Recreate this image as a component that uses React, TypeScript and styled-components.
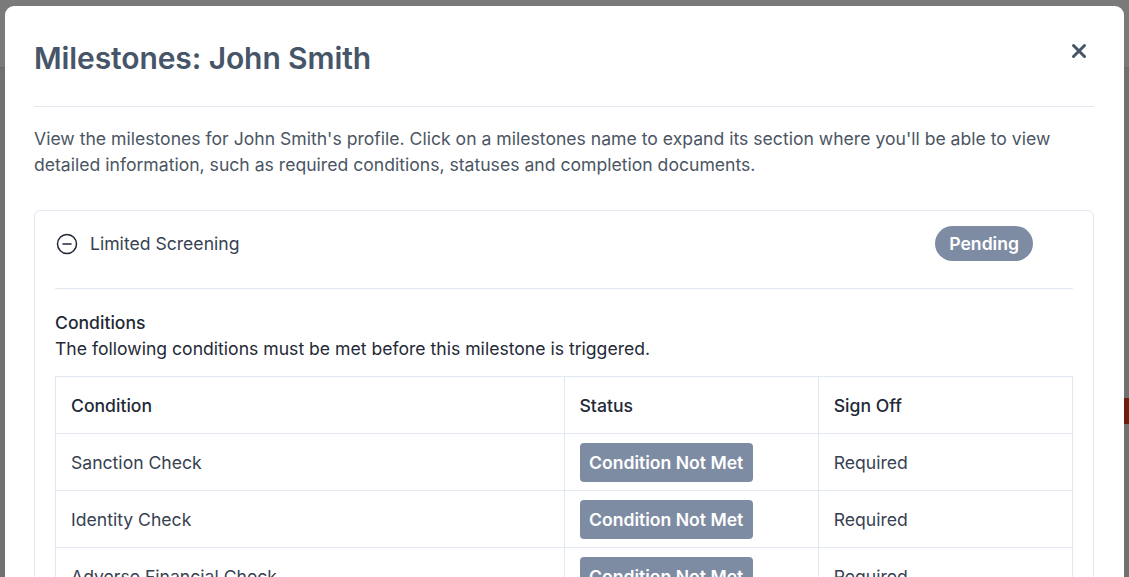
import React from 'react';
import styled, { createGlobalStyle } from 'styled-components';

const GlobalStyle = createGlobalStyle`
  html, body {
    margin: 0;
    padding: 0;
    height: 100%;
    overflow: hidden;
    font-family: Inter, "Noto Sans", "Liberation Sans", sans-serif;
  }
  * { box-sizing: border-box; }
`;

type Condition = {
  name: string;
  status: string;
  signOff: string;
};

const conditions: Condition[] = [
  { name: 'Sanction Check', status: 'Condition Not Met', signOff: 'Required' },
  { name: 'Identity Check', status: 'Condition Not Met', signOff: 'Required' },
  { name: 'Adverse Financial Check', status: 'Condition Not Met', signOff: 'Required' },
];

/* page behind the overlay */
const Page = styled.div`
  height: 100vh;
  display: flex;
  flex-direction: column;
  background: #ececec;
`;

const PageHeader = styled.div`
  height: 68px;
  background: #fff;
  border-bottom: 1px solid #ddd;
`;

const PageBody = styled.div`
  flex: 1;
  display: flex;
  justify-content: flex-end;
  padding-top: 330px;
`;

const SideAction = styled.div`
  width: 40px;
  height: 26px;
  background: #e0401f;
`;

const Overlay = styled.div`
  position: fixed;
  inset: 0;
  background: rgba(0, 0, 0, 0.52);
  overflow: hidden;
  padding: 6px 5px 0 5px;
`;

const Modal = styled.div`
  background: #fff;
  border-radius: 9px;
  padding: 0 30px 40px 29px;
  min-height: 700px;
`;

const Header = styled.div`
  display: flex;
  align-items: center;
  justify-content: space-between;
  height: 101px;
  border-bottom: 1px solid #e2e8f0;
  padding-top: 4px;
`;

const Title = styled.h2`
  margin: 0;
  font-size: 30px;
  font-weight: 600;
  color: #475569;
  letter-spacing: -0.1px;
`;

const CloseButton = styled.button`
  border: none;
  background: none;
  padding: 0;
  margin-right: 7px;
  margin-top: -14px;
  display: flex;
  cursor: pointer;
`;

const Intro = styled.p`
  margin: 19px 0 32px;
  font-size: 17.6px;
  line-height: 26px;
  color: #4b5563;
  max-width: 1040px;
`;

const Card = styled.div`
  border: 1px solid #e2e8f0;
  border-radius: 6px;
  padding: 0 20px 20px 20px;
`;

const CardHeader = styled.div`
  display: flex;
  align-items: center;
  height: 78px;
  border-bottom: 1px solid #e2e8f0;
  padding-right: 40px;
  padding-bottom: 12px;
`;

const CardTitle = styled.span`
  flex: 1;
  display: flex;
  align-items: center;
  gap: 12px;
  font-size: 17.6px;
  color: #374151;
  padding-left: 1px;
`;

const Pill = styled.span`
  display: inline-flex;
  align-items: center;
  height: 35px;
  padding: 0 14px;
  border-radius: 18px;
  background: #7e8ca3;
  color: #fff;
  font-size: 17.6px;
  font-weight: 600;
`;

const SectionTitle = styled.div`
  margin-top: 22px;
  font-size: 17.6px;
  font-weight: 500;
  color: #1f2937;
  line-height: 23px;
`;

const SectionText = styled.div`
  font-size: 17.6px;
  color: #1f2937;
  line-height: 29px;
  margin-bottom: 13px;
`;

const Table = styled.table`
  width: 100%;
  border-collapse: collapse;
  table-layout: fixed;
`;

const Th = styled.th<{ $width: string }>`
  width: ${(p) => p.$width};
  text-align: left;
  height: 57px;
  padding: 0 15px;
  border: 1px solid #e2e8f0;
  font-size: 17.6px;
  font-weight: 500;
  color: #1f2937;
`;

const Td = styled.td`
  height: 57px;
  padding: 0 15px;
  border: 1px solid #e2e8f0;
  font-size: 17.6px;
  color: #374151;
`;

const StatusTag = styled.span`
  display: inline-flex;
  align-items: center;
  height: 39px;
  padding: 0 9.5px;
  border-radius: 4px;
  background: #7e8ca3;
  color: #fff;
  font-size: 17.6px;
  font-weight: 600;
`;

function CloseIcon() {
  return (
    <svg width="16" height="16" viewBox="0 0 16 16">
      <path d="M2.5 2.5 L13.5 13.5 M13.5 2.5 L2.5 13.5" stroke="#475569" strokeWidth="3" strokeLinecap="round" />
    </svg>
  );
}

function MinusCircle() {
  return (
    <svg width="22" height="22" viewBox="0 0 22 22">
      <circle cx="11" cy="11" r="9.5" fill="none" stroke="#1f2937" strokeWidth="1.5" />
      <path d="M7 11 H15" stroke="#1f2937" strokeWidth="1.5" strokeLinecap="round" />
    </svg>
  );
}

function ConditionsTable({ rows }: { rows: Condition[] }) {
  return (
    <Table>
      <thead>
        <tr>
          <Th $width="50%">Condition</Th>
          <Th $width="25%">Status</Th>
          <Th $width="25%">Sign Off</Th>
        </tr>
      </thead>
      <tbody>
        {rows.map((row, i) => (
          <tr key={i}>
            <Td>{row.name}</Td>
            <Td>
              <StatusTag>{row.status}</StatusTag>
            </Td>
            <Td>{row.signOff}</Td>
          </tr>
        ))}
      </tbody>
    </Table>
  );
}

export default function App() {
  return (
    <>
      <GlobalStyle />
      <Page>
        <PageHeader />
        <PageBody>
          <SideAction />
        </PageBody>
      </Page>
      <Overlay>
        <Modal>
          <Header>
            <Title>Milestones: John Smith</Title>
            <CloseButton aria-label="Close">
              <CloseIcon />
            </CloseButton>
          </Header>
          <Intro>
            View the milestones for John Smith's profile. Click on a milestones name to expand its section where you'll be able to view detailed information, such as required conditions, statuses and completion documents.
          </Intro>
          <Card>
            <CardHeader>
              <CardTitle>
                <MinusCircle />
                Limited Screening
              </CardTitle>
              <Pill>Pending</Pill>
            </CardHeader>
            <SectionTitle>Conditions</SectionTitle>
            <SectionText>The following conditions must be met before this milestone is triggered.</SectionText>
            <ConditionsTable rows={conditions} />
          </Card>
        </Modal>
      </Overlay>
    </>
  );
}
